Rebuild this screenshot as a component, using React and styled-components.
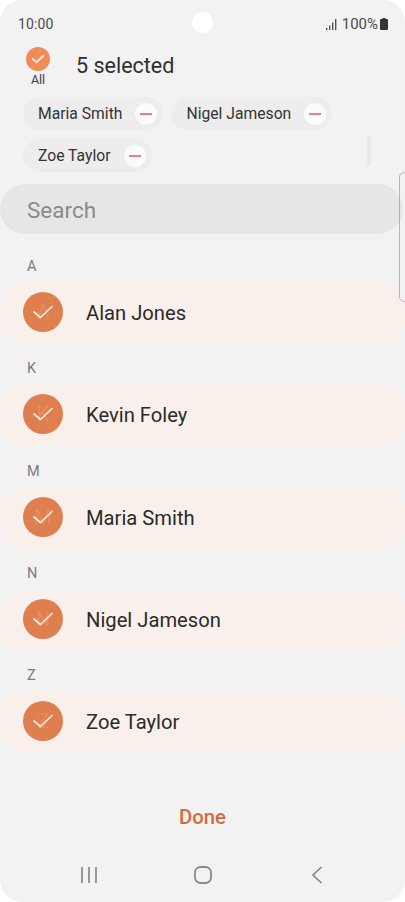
import React from 'react';
import styled, { createGlobalStyle } from 'styled-components';

const GlobalStyle = createGlobalStyle`
  html, body {
    margin: 0;
    padding: 0;
    background: #ffffff;
    font-family: Roboto, "Liberation Sans", sans-serif;
  }
`;

const selected = ['Maria Smith', 'Nigel Jameson', 'Zoe Taylor'];

const contacts = [
  { letter: 'A', name: 'Alan Jones' },
  { letter: 'K', name: 'Kevin Foley' },
  { letter: 'M', name: 'Maria Smith' },
  { letter: 'N', name: 'Nigel Jameson' },
  { letter: 'Z', name: 'Zoe Taylor' },
];

const Check = ({ size, weight }) => (
  <CheckIcon width={size} height={size} viewBox="0 0 20 20">
    <path d="M1 10 L7.5 15.5 L19 4.5" fill="none" stroke="#fbebe0" strokeWidth={weight} strokeLinecap="round" strokeLinejoin="round" />
  </CheckIcon>
);

const App = () => (
  <>
    <GlobalStyle />
    <Screen>
      <StatusBar>
        <Time>10:00</Time>
        <Camera />
        <StatusRight>
          <svg width="11" height="11" viewBox="0 0 11 11">
            <rect x="0" y="9" width="1.4" height="2" fill="#555" />
            <rect x="3" y="6.5" width="1.4" height="4.5" fill="#555" />
            <rect x="6" y="3.5" width="1.4" height="7.5" fill="#555" />
            <rect x="9" y="0" width="1.4" height="11" fill="#555" />
          </svg>
          <Percent>100%</Percent>
          <svg width="8" height="12" viewBox="0 0 8 12">
            <path d="M2.5 0 H5.5 V1 H7 A1 1 0 0 1 8 2 V11 A1 1 0 0 1 7 12 H1 A1 1 0 0 1 0 11 V2 A1 1 0 0 1 1 1 H2.5 Z" fill="#333" />
          </svg>
        </StatusRight>
      </StatusBar>

      <Header>
        <AllToggle>
          <AllCircle><Check size={12} weight={3.2} /></AllCircle>
          <AllLabel>All</AllLabel>
        </AllToggle>
        <Title>5 selected</Title>
      </Header>

      <ChipArea>
        {selected.map((name) => (
          <Chip key={name}>
            {name}
            <Remove><RemoveBar /></Remove>
          </Chip>
        ))}
        <ChipScroll />
      </ChipArea>

      <SearchBox>Search</SearchBox>

      <List>
        {contacts.map((c) => (
          <Section key={c.letter}>
            <Letter>{c.letter}</Letter>
            <Row>
              <Avatar>
                <Ghost>{c.name[0]}</Ghost>
                <Check size={20} weight={1.7} />
              </Avatar>
              <Name>{c.name}</Name>
            </Row>
          </Section>
        ))}
      </List>

      <Done>Done</Done>

      <NavBar>
        <svg width="18" height="18" viewBox="0 0 18 18">
          <path d="M2 1 V17 M9 1 V17 M16 1 V17" stroke="#8a8a8a" strokeWidth="1.7" fill="none" />
        </svg>
        <svg width="18" height="18" viewBox="0 0 18 18">
          <rect x="1" y="1" width="16" height="16" rx="5.5" stroke="#8a8a8a" strokeWidth="1.8" fill="none" />
        </svg>
        <svg width="12" height="18" viewBox="0 0 12 18">
          <path d="M10.5 1 L2 9 L10.5 17" stroke="#8a8a8a" strokeWidth="1.7" fill="none" />
        </svg>
      </NavBar>

      <EdgeHandle />
    </Screen>
  </>
);

const Screen = styled.div`
  position: relative;
  width: 405px;
  height: 902px;
  overflow: hidden;
  display: flex;
  flex-direction: column;
  background: #f2f2f2;
  border-radius: 22px;
`;

const StatusBar = styled.div`
  position: relative;
  height: 47px;
  flex: none;
  display: flex;
  align-items: center;
  justify-content: space-between;
  padding: 1px 17px 0 18px;
  box-sizing: border-box;
  color: #4a4a4a;
  font-size: 14px;
`;

const Time = styled.span`
  letter-spacing: 0.1px;
`;

const Camera = styled.div`
  position: absolute;
  left: 192px;
  top: 12px;
  width: 21px;
  height: 21px;
  border-radius: 50%;
  background: #ffffff;
`;

const StatusRight = styled.div`
  display: flex;
  align-items: center;
`;

const Percent = styled.span`
  font-size: 15px;
  margin: 0 2px 0 5px;
`;

const Header = styled.div`
  height: 50px;
  flex: none;
  display: flex;
  align-items: flex-start;
  padding-left: 26px;
`;

const AllToggle = styled.div`
  width: 24px;
  display: flex;
  flex-direction: column;
  align-items: center;
`;

const AllCircle = styled.div`
  width: 24px;
  height: 24px;
  border-radius: 50%;
  background: #ef8c58;
  display: flex;
  align-items: center;
  justify-content: center;
`;

const AllLabel = styled.div`
  font-size: 12.5px;
  line-height: 15px;
  margin-top: 1px;
  color: #3c3c3c;
`;

const Title = styled.div`
  margin-left: 26px;
  margin-top: 4px;
  font-size: 21.5px;
  line-height: 30px;
  color: #2f2f2f;
`;

const ChipArea = styled.div`
  position: relative;
  flex: none;
  height: 87px;
  box-sizing: border-box;
  padding: 0 60px 0 23px;
  display: flex;
  flex-wrap: wrap;
  align-content: flex-start;
  gap: 9px 8px;
`;

const Chip = styled.div`
  height: 33px;
  box-sizing: border-box;
  display: flex;
  align-items: center;
  padding: 0 6px 0 15px;
  border-radius: 17px;
  background: #ededed;
  font-size: 15.7px;
  color: #333333;
`;

const Remove = styled.div`
  width: 22px;
  height: 22px;
  margin-left: 13px;
  border-radius: 50%;
  background: #fbfbfb;
  display: flex;
  align-items: center;
  justify-content: center;
`;

const RemoveBar = styled.div`
  width: 12px;
  height: 2px;
  background: #e98184;
`;

const ChipScroll = styled.div`
  position: absolute;
  right: 34px;
  top: 38px;
  width: 4px;
  height: 31px;
  border-radius: 2px;
  background: #e9e9e9;
`;

const SearchBox = styled.div`
  flex: none;
  height: 50px;
  box-sizing: border-box;
  width: 403px;
  padding: 1px 0 0 27px;
  display: flex;
  align-items: center;
  border-radius: 25px;
  background: #e6e6e6;
  font-size: 22.5px;
  color: #8a8a8a;
`;

const List = styled.div`
  flex: 1;
  display: flex;
  flex-direction: column;
  padding-top: 22px;
  gap: 14.25px;
`;

const Section = styled.div`
  display: flex;
  flex-direction: column;
`;

const Letter = styled.div`
  height: 26px;
  padding-left: 27px;
  font-size: 14.5px;
  line-height: 22px;
  color: #7b7b7b;
`;

const Row = styled.div`
  height: 62px;
  display: flex;
  align-items: center;
  padding-left: 23px;
  border-radius: 24px;
  background: #f9f0ec;
`;

const Avatar = styled.div`
  position: relative;
  width: 40px;
  height: 40px;
  flex: none;
  margin-bottom: 2px;
  border-radius: 50%;
  background: #df7e4f;
  display: flex;
  align-items: center;
  justify-content: center;
`;

const Ghost = styled.span`
  position: absolute;
  inset: 0;
  display: flex;
  align-items: center;
  justify-content: center;
  font-size: 20px;
  color: #e88c60;
`;

const CheckIcon = styled.svg`
  position: relative;
  display: block;
`;

const Name = styled.div`
  margin-left: 23px;
  font-size: 20.2px;
  color: #2b2b2b;
`;

const Done = styled.div`
  flex: none;
  height: 40px;
  display: flex;
  align-items: center;
  justify-content: center;
  font-size: 20.3px;
  font-weight: 500;
  color: #cf6d3d;
`;

const NavBar = styled.div`
  flex: none;
  height: 65px;
  box-sizing: border-box;
  padding: 23px 0 12px 80px;
  display: grid;
  grid-template-columns: 114px 117px 12px;
  align-items: center;
`;

const EdgeHandle = styled.div`
  position: absolute;
  right: -4px;
  top: 172px;
  width: 8px;
  height: 128px;
  border: 1px solid #b5b5b5;
  border-radius: 5px;
`;

export default App;
